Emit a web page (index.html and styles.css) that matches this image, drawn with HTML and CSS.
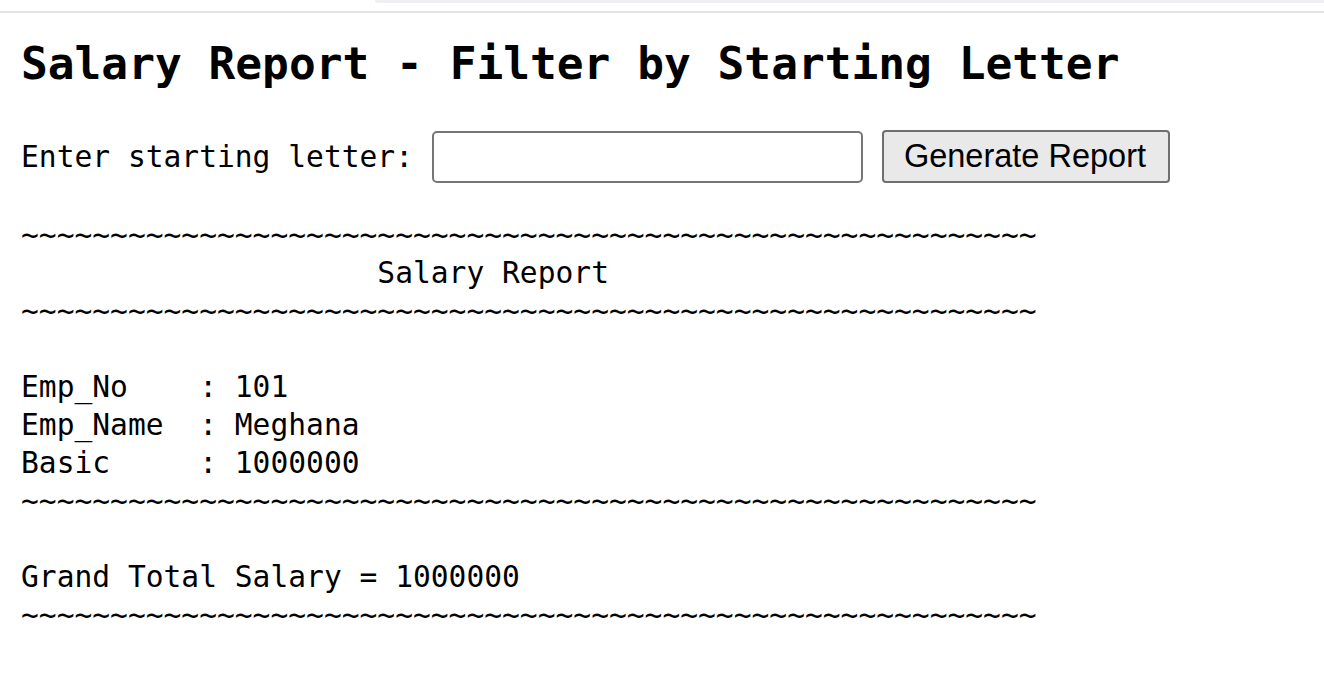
FILE: index.html
```html
<!DOCTYPE html>
<html lang="en">
<head>
<meta charset="utf-8">
<title>Salary Report</title>
<link rel="stylesheet" href="styles.css">
</head>
<body>
<div class="chrome"><div class="chrome-tab"></div></div>
<main class="page">
<h1 class="title">Salary Report - Filter by Starting Letter</h1>
<form class="filter" onsubmit="return false">
<label class="filter-label" for="letter">Enter starting letter:</label>
<input class="filter-input" id="letter" type="text">
<button class="filter-btn" type="button">Generate Report</button>
</form>
<pre class="report">~~~~~~~~~~~~~~~~~~~~~~~~~~~~~~~~~~~~~~~~~~~~~~~~~~~~~~~~~
                    Salary Report
~~~~~~~~~~~~~~~~~~~~~~~~~~~~~~~~~~~~~~~~~~~~~~~~~~~~~~~~~

Emp_No    : 101
Emp_Name  : Meghana
Basic     : 1000000
~~~~~~~~~~~~~~~~~~~~~~~~~~~~~~~~~~~~~~~~~~~~~~~~~~~~~~~~~

Grand Total Salary = 1000000
~~~~~~~~~~~~~~~~~~~~~~~~~~~~~~~~~~~~~~~~~~~~~~~~~~~~~~~~~</pre>
</main>
</body>
</html>
```

FILE: styles.css
```css
html, body {
  margin: 0;
  padding: 0;
  background: #ffffff;
}

body {
  font-family: "DejaVu Sans Mono", "Liberation Mono", monospace;
  color: #000;
}

.chrome {
  height: 11px;
  border-bottom: 2px solid #e3e3e3;
  display: flex;
  justify-content: flex-end;
  align-items: flex-start;
}

.chrome-tab {
  width: calc(100% - 375px);
  height: 3px;
  background: #eeeef3;
  border-bottom-left-radius: 3px;
}

.page {
  padding: 0 21px;
}

.title {
  margin: 25px 0 0 0;
  font-size: 44.5px;
  line-height: 52px;
  font-weight: bold;
}

.filter {
  display: flex;
  align-items: center;
  margin-top: 40px;
  gap: 19px;
}

.filter-label {
  font-size: 29.6px;
  line-height: 38px;
}

.filter-input {
  box-sizing: border-box;
  width: 431px;
  height: 52px;
  margin: 0;
  border: 2px solid #767676;
  border-radius: 5px;
  background: #fff;
  padding: 0 4px;
  font-size: 30px;
}

.filter-btn {
  box-sizing: border-box;
  width: 288px;
  height: 53px;
  margin: 0;
  border: 2px solid #6f6f6f;
  border-radius: 4px;
  background: #e9e9e9;
  font-family: "Liberation Sans", Arial, sans-serif;
  font-size: 32.5px;
  color: #000;
  padding: 0 2px 0 0;
}

.report {
  margin: 33px 0 0 0;
  font-family: "DejaVu Sans Mono", "Liberation Mono", monospace;
  font-size: 29.6px;
  line-height: 38px;
}
```
